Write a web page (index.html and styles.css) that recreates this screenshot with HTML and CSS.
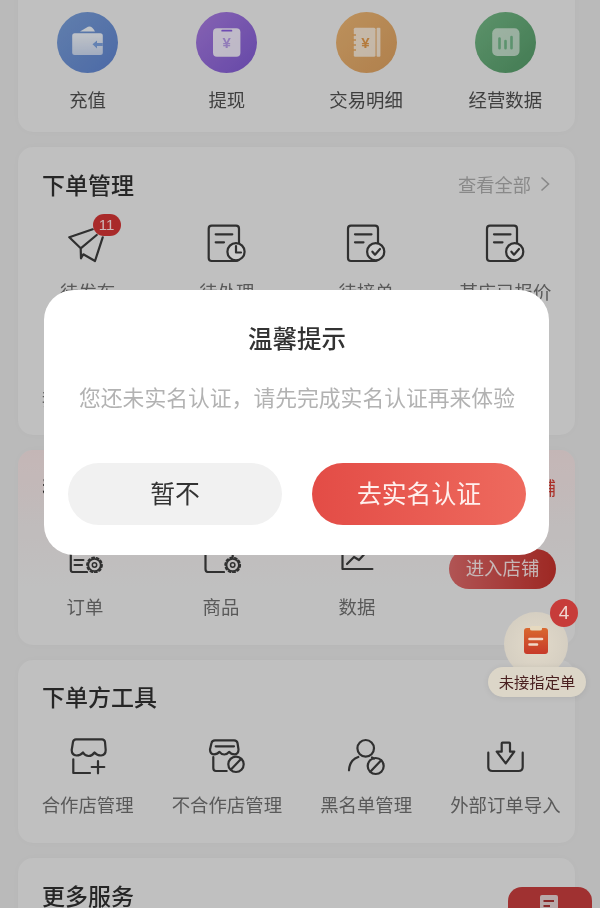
FILE: index.html
```html
<!DOCTYPE html>
<html lang="zh-CN">
<head>
    <meta charset="UTF-8">
    <meta name="viewport" content="width=device-width, initial-scale=1.0">
    <title>工作台</title>
    <link rel="stylesheet" href="styles.css">
</head>
<body>
<div class="screen">

    <div class="page">
        <!-- Wallet shortcuts -->
        <section class="card card-wallet">
            <div class="grid-four">
                <div class="tile">
                    <svg class="coin" viewBox="0 0 61 61">
                        <defs>
                            <linearGradient id="blue" x1="0" y1="0" x2="1" y2="1"><stop offset="0" stop-color="#7a9fd8"/><stop offset="1" stop-color="#5f84d0"/></linearGradient>
                            <linearGradient id="purple" x1="0" y1="0" x2="1" y2="1"><stop offset="0" stop-color="#a87ce0"/><stop offset="1" stop-color="#7f5ad2"/></linearGradient>
                            <linearGradient id="orange" x1="0" y1="0" x2="1" y2="1"><stop offset="0" stop-color="#ecb674"/><stop offset="1" stop-color="#dca060"/></linearGradient>
                            <linearGradient id="green" x1="0" y1="0" x2="1" y2="1"><stop offset="0" stop-color="#74b886"/><stop offset="1" stop-color="#549a68"/></linearGradient>
                            <linearGradient id="wallet" x1="0" y1="0" x2="0" y2="1"><stop offset="0" stop-color="#fff" stop-opacity=".9"/><stop offset="1" stop-color="#fff" stop-opacity=".65"/></linearGradient>
                        </defs>
                        <circle cx="30.5" cy="30.5" r="30.5" fill="url(#blue)"/>
                        <path d="M23 19.5 L31 14.8 Q34.5 13 38 19.5 Z" fill="#fff" fill-opacity=".9"/>
                        <rect x="15.2" y="21.3" width="30.6" height="21.7" rx="2.5" fill="url(#wallet)"/>
                        <path d="M35.5 32.3 L40 28.5 V31 H45.8 V34 H40 V36.5 Z" fill="#7da3e0"/>
                    </svg>
                    <span class="tile-label label-dark">充值</span>
                </div>
                <div class="tile">
                    <svg class="coin" viewBox="0 0 61 61">
                        <circle cx="30.5" cy="30.5" r="30.5" fill="url(#purple)"/>
                        <rect x="17" y="16.3" width="27.4" height="28.4" rx="4" fill="#fff" fill-opacity=".85"/>
                        <rect x="25.3" y="17.8" width="11" height="1.8" rx=".9" fill="#8a5fe0"/>
                        <text x="30.7" y="36" class="coin-yen" fill="#b79be8">¥</text>
                    </svg>
                    <span class="tile-label label-dark">提现</span>
                </div>
                <div class="tile">
                    <svg class="coin" viewBox="0 0 61 61">
                        <circle cx="30.5" cy="30.5" r="30.5" fill="url(#orange)"/>
                        <rect x="17.8" y="15.7" width="21.7" height="29" rx="1.5" fill="#fff" fill-opacity=".7"/>
                        <rect x="40.6" y="15.7" width="3.8" height="29" rx="1" fill="#fff" fill-opacity=".7"/>
                        <path d="M16.5 23 H20 M16.5 28 H20 M16.5 33 H20 M16.5 38 H20" stroke="#e8a860" stroke-width="1.5"/>
                        <text x="29.5" y="36" class="coin-yen" fill="#e39a4c">¥</text>
                    </svg>
                    <span class="tile-label label-dark">交易明细</span>
                </div>
                <div class="tile">
                    <svg class="coin" viewBox="0 0 61 61">
                        <circle cx="30.5" cy="30.5" r="30.5" fill="url(#green)"/>
                        <rect x="17.2" y="16.3" width="27.3" height="27.7" rx="5" fill="#fff" fill-opacity=".6"/>
                        <path d="M24.5 26.5 V36.3 M30.5 29 V36.3 M36.5 25 V36.3" stroke="#73b88a" stroke-width="2.6" stroke-linecap="round"/>
                    </svg>
                    <span class="tile-label label-dark">经营数据</span>
                </div>
            </div>
        </section>

        <!-- Orders -->
        <section class="card card-orders">
            <div class="card-head">
                <h2 class="card-title">下单管理</h2>
                <span class="see-all">查看全部
                    <svg class="chevron" viewBox="0 0 10 16"><path d="M1.5 1.5 L8.5 8 L1.5 14.5"/></svg>
                </span>
            </div>
            <div class="grid-four row-gap">
                <div class="tile tile-line">
                    <div class="line-icon">
                        <svg viewBox="0 0 44 40"><path d="M26.7 6.3 L3.3 14.3 L14.7 25.3 L15 35.3 L17.3 31.3 L29 38 L36.7 14.3 M14.7 25.3 L30.7 12"/></svg>
                        <span class="count-badge">11</span>
                    </div>
                    <span class="tile-label">待发布</span>
                </div>
                <div class="tile tile-line">
                    <div class="line-icon">
                        <svg viewBox="0 0 44 40">
                            <rect x="3.7" y="2.7" width="30.3" height="35.3" rx="3"/>
                            <path d="M10.7 11.3 H27.3 M10.7 19.3 H19"/>
                            <circle cx="31" cy="28.7" r="8.6" fill="#fff"/>
                            <path d="M31 23 V29.5 H36"/>
                        </svg>
                    </div>
                    <span class="tile-label">待处理</span>
                </div>
                <div class="tile tile-line">
                    <div class="line-icon">
                        <svg viewBox="0 0 44 40">
                            <rect x="4" y="2.7" width="30" height="35.3" rx="3"/>
                            <path d="M11 11.3 H27.5 M11 19.3 H19.5"/>
                            <circle cx="31.7" cy="28.7" r="8.6" fill="#fff"/>
                            <path d="M28.4 28.7 L31 31.7 L36 26"/>
                        </svg>
                    </div>
                    <span class="tile-label">待接单</span>
                </div>
                <div class="tile tile-line">
                    <div class="line-icon">
                        <svg viewBox="0 0 44 40">
                            <rect x="4" y="2.7" width="30" height="35.3" rx="3"/>
                            <path d="M11 11.3 H27.5 M11 19.3 H19.5"/>
                            <circle cx="31.7" cy="28.7" r="8.6" fill="#fff"/>
                            <path d="M28.4 28.7 L31 31.7 L36 26"/>
                        </svg>
                    </div>
                    <span class="tile-label">某店已报价</span>
                </div>
                <div class="tile tile-line">
                    <div class="line-icon"></div>
                    <span class="tile-label">我的报价单</span>
                </div>
            </div>
        </section>

        <!-- Shop -->
        <section class="card card-shop">
            <div class="card-head shop-head">
                <h2 class="card-title">我的店铺</h2>
                <span class="shop-link">管理店铺</span>
            </div>
            <div class="grid-shop">
                <div class="tile tile-line tile-shop">
                    <div class="line-icon">
                        <svg viewBox="0 0 44 40">
                            <path d="M7.8 4 V37 Q7.8 39 10 39 H24 M11.6 27 H20.4 M11.6 32 H19"/>
                            <circle cx="31.5" cy="32" r="6.2" stroke-width="1.8"/>
                            <circle cx="31.5" cy="32" r="7.4" stroke-width="2" stroke-dasharray="2 2.6"/>
                            <circle cx="31.5" cy="32" r="2.2" stroke-width="1.5"/>
                        </svg>
                    </div>
                    <span class="tile-label">订单</span>
                </div>
                <div class="tile tile-line tile-shop">
                    <div class="line-icon">
                        <svg viewBox="0 0 44 40">
                            <path d="M6.5 4 V36 Q6.5 39 9 39 H25 M33.7 19 V24"/>
                            <circle cx="33.7" cy="32" r="6.2" stroke-width="1.8"/>
                            <circle cx="33.7" cy="32" r="7.4" stroke-width="2" stroke-dasharray="2 2.6"/>
                            <circle cx="33.7" cy="32" r="2.2" stroke-width="1.5"/>
                        </svg>
                    </div>
                    <span class="tile-label">商品</span>
                </div>
                <div class="tile tile-line tile-shop">
                    <div class="line-icon">
                        <svg viewBox="0 0 44 40"><path d="M7.5 4 V36 H37.4 M12 31 L19 24 L24 27 L35 15"/></svg>
                    </div>
                    <span class="tile-label">数据</span>
                </div>
                <span class="enter-shop">进入店铺</span>
            </div>
        </section>

        <!-- Buyer tools -->
        <section class="card card-tools">
            <div class="card-head">
                <h2 class="card-title">下单方工具</h2>
            </div>
            <div class="grid-four">
                <div class="tile tile-line">
                    <div class="line-icon">
                        <svg viewBox="0 0 44 40">
                            <path d="M5.7 14 L7 6 Q7.5 3.3 10 3.3 H36 Q38.5 3.3 39 6 L39.7 14 Q39.7 19 35 19.5 Q31 19.5 28.5 16.5 Q26 20 22.7 20 Q19 20 17 16.5 Q14.5 19.5 10.5 19.5 Q5.7 19 5.7 14 Z"/>
                            <path d="M7.3 23.3 V37 H24 M25.7 31 H38.3 M32 25 V37.3"/>
                        </svg>
                    </div>
                    <span class="tile-label">合作店管理</span>
                </div>
                <div class="tile tile-line">
                    <div class="line-icon">
                        <svg viewBox="0 0 44 40">
                            <path d="M5 13.5 L6.5 7 Q7 4.3 10 4.3 H29 Q32 4.3 32.5 7 L33.5 13.5 Q33.5 18 29.5 18.3 Q26 18.3 24.3 15.8 Q22 18.5 19.3 18.5 Q16.5 18.5 14.5 15.8 Q12.5 18.3 9 18.3 Q5 18 5 13.5 Z"/>
                            <path d="M10.7 10.3 H29 M8.3 21 V32 Q8.3 35 11 35 H21.7"/>
                            <circle cx="31" cy="28.3" r="7.7"/>
                            <path d="M26 33.5 L36 23"/>
                        </svg>
                    </div>
                    <span class="tile-label">不合作店管理</span>
                </div>
                <div class="tile tile-line">
                    <div class="line-icon">
                        <svg viewBox="0 0 44 40">
                            <circle cx="21.7" cy="12.3" r="8.3"/>
                            <path d="M5 34.3 Q5.5 24 14.3 21 M28 21.5 L30 22.5"/>
                            <circle cx="31.7" cy="30" r="8"/>
                            <path d="M26.5 35.5 L37 24.5"/>
                        </svg>
                    </div>
                    <span class="tile-label">黑名单管理</span>
                </div>
                <div class="tile tile-line">
                    <div class="line-icon">
                        <svg viewBox="0 0 44 40">
                            <path d="M5.3 16.7 V31 Q5.3 35 9.5 35 H35.5 Q39.7 35 39.7 31 V16.7"/>
                            <path d="M18.7 7.5 Q18.7 6.7 19.5 6.7 H26.2 Q27 6.7 27 7.5 V15.7 H31.3 L22.7 27.3 L13.7 15.7 H18.7 Z"/>
                        </svg>
                    </div>
                    <span class="tile-label">外部订单导入</span>
                </div>
            </div>
        </section>

        <!-- More -->
        <section class="card card-more">
            <div class="card-head">
                <h2 class="card-title">更多服务</h2>
            </div>
        </section>
    </div>

    <!-- Bottom right tab -->
    <div class="side-tab">
        <svg viewBox="0 0 22 20"><path d="M3 0 H17 Q19 0 19 2 V20 H1 V2 Q1 0 3 0 Z" fill="#e6d4d4"/><path d="M4.5 6 H15 M4.5 11 H11" stroke="#ac3535" stroke-width="2"/></svg>
    </div>

    <div class="overlay">
        <div class="modal">
            <h3 class="modal-title">温馨提示</h3>
            <p class="modal-text">您还未实名认证，请先完成实名认证再来体验</p>
            <div class="modal-actions">
                <button class="btn btn-plain">暂不</button>
                <button class="btn btn-primary">去实名认证</button>
            </div>
        </div>
    </div>

    <!-- Floating reminder -->
    <div class="float-order">
        <div class="float-circle">
            <svg viewBox="0 0 24 28">
                <defs>
                    <linearGradient id="clip" x1="0" y1="0" x2="0" y2="1"><stop offset="0" stop-color="#d9682f"/><stop offset="1" stop-color="#c73a2a"/></linearGradient>
                </defs>
                <path d="M3 2 H21 Q24 2 24 5 V25 Q24 28 21 28 H3 Q0 28 0 25 V5 Q0 2 3 2 Z" fill="url(#clip)"/>
                <path d="M6 1.5 Q6 0 8 0 H16 Q18 0 18 1.5 V3 Q18 4.5 16 4.5 H8 Q6 4.5 6 3 Z" fill="#e6d9bf"/>
                <path d="M5.5 13 H18 M5.5 18.5 H13" stroke="#f0d8c8" stroke-width="2.6" stroke-linecap="round"/>
            </svg>
        </div>
        <span class="float-badge">4</span>
        <span class="float-label">未接指定单</span>
    </div>

</div>
</body>
</html>
```

FILE: styles.css
```css
/* General styling */
html, body {
    margin: 0;
    padding: 0;
}

body {
    width: 600px;
    height: 908px;
    overflow: hidden;
    font-family: "Noto Sans CJK SC", "Noto Sans", sans-serif;
}

.screen {
    position: relative;
    width: 600px;
    height: 908px;
    overflow: hidden;
    background-color: rgb(233, 233, 233);
    filter: blur(0.4px);
}

.page {
    display: flex;
    flex-direction: column;
    gap: 15px;
    margin-top: -20px;
    padding: 0 25px 0 18px;
}

/* Cards */
.card {
    background-color: rgb(240, 240, 240);
    border-radius: 15px;
    box-shadow: 0 0 8px rgba(0, 0, 0, 0.02);
}

.card-wallet {
    padding: 32px 0 20px;
}

.card-orders {
    padding: 21px 0 24px;
}

.card-shop {
    padding: 21px 0 26px;
    background: linear-gradient(180deg, rgb(246, 228, 228) 0, rgb(240, 236, 236) 45%, rgb(240, 240, 240) 70%);
}

.card-tools {
    padding: 20px 0 26px;
}

.card-more {
    height: 120px;
    padding: 21px 0 0;
    box-sizing: border-box;
}

.card-more .card-title {
    line-height: 26px;
}

.card-head {
    display: flex;
    justify-content: space-between;
    align-items: center;
    height: 32px;
    padding: 0 25px 0 24px;
    margin-bottom: 24px;
}

.card-orders .card-head {
    margin-bottom: 23px;
}

.shop-head {
    padding-right: 19px;
    margin-bottom: 30px;
}

.card-title {
    margin: 0;
    font-size: 23px;
    font-weight: 500;
    line-height: 32px;
    color: rgb(48, 48, 48);
}

.see-all {
    display: flex;
    align-items: center;
    gap: 9px;
    font-size: 18.3px;
    color: rgb(172, 172, 172);
}

.chevron {
    width: 10px;
    height: 16px;
    fill: none;
    stroke: rgb(172, 172, 172);
    stroke-width: 1.6;
}

.shop-link {
    font-size: 18px;
    color: rgb(214, 60, 50);
}

/* Tile grids */
.grid-four {
    display: grid;
    grid-template-columns: repeat(4, 139.25px);
}

.row-gap {
    row-gap: 26px;
}

.grid-shop {
    display: grid;
    grid-template-columns: repeat(3, 136px) 1fr;
    margin-left: -1px;
}

.tile {
    display: flex;
    flex-direction: column;
    align-items: center;
    gap: 13px;
    min-width: 0;
}

.tile-line {
    gap: 15px;
}

.tile-shop {
    gap: 20px;
}

.tile-label {
    font-size: 18.4px;
    line-height: 26px;
    white-space: nowrap;
    color: rgb(112, 112, 112);
}

.label-dark {
    color: rgb(80, 80, 80);
}

.coin {
    display: block;
    width: 61px;
    height: 61px;
}

.coin-yen {
    font-family: "Liberation Sans", sans-serif;
    font-size: 15px;
    font-weight: bold;
    text-anchor: middle;
}

.line-icon {
    position: relative;
    width: 44px;
    height: 40px;
}

.line-icon svg {
    display: block;
    width: 44px;
    height: 40px;
    fill: none;
    stroke: rgb(60, 60, 60);
    stroke-width: 2.2;
    stroke-linejoin: round;
    stroke-linecap: round;
}

.count-badge {
    position: absolute;
    left: 27px;
    top: -9px;
    width: 28px;
    height: 22px;
    border-radius: 11px;
    background-color: rgb(212, 53, 53);
    color: rgb(255, 230, 230);
    font-family: "Liberation Sans", sans-serif;
    font-size: 15px;
    line-height: 22px;
    text-align: center;
}

.enter-shop {
    justify-self: end;
    align-self: start;
    margin: 16px 19px 0 0;
    width: 107px;
    height: 40px;
    border-radius: 20px;
    background: linear-gradient(90deg, rgb(221, 106, 106), rgb(197, 50, 44));
    color: rgba(255, 255, 255, 0.85);
    font-size: 18.4px;
    line-height: 36px;
    text-align: center;
}

/* Tab peeking in at the bottom */
.side-tab {
    position: absolute;
    left: 508px;
    top: 887px;
    width: 84px;
    height: 40px;
    border-radius: 14px 14px 0 0;
    background-color: rgb(200, 62, 62);
    display: flex;
    justify-content: center;
    padding-top: 8px;
    box-sizing: border-box;
}

.side-tab svg {
    width: 22px;
    height: 20px;
}

/* Modal */
.overlay {
    position: absolute;
    inset: 0;
    background-color: rgba(0, 0, 0, 0.2);
    display: flex;
    align-items: flex-start;
    padding: 290px 0 0 44px;
    box-sizing: border-box;
}

.modal {
    width: 505px;
    height: 265px;
    box-sizing: border-box;
    padding: 31px 23px 0 24px;
    border-radius: 30px;
    background-color: white;
}

.modal-title {
    margin: 0;
    font-size: 24.5px;
    font-weight: 500;
    line-height: 34px;
    text-align: center;
    color: rgb(51, 51, 51);
}

.modal-text {
    margin: 25px 0 0;
    font-size: 21.8px;
    line-height: 34px;
    text-align: center;
    white-space: nowrap;
    color: rgb(178, 178, 178);
}

.modal-actions {
    display: flex;
    justify-content: space-between;
    margin-top: 49px;
}

.btn {
    width: 214px;
    height: 62px;
    border: none;
    border-radius: 31px;
    padding: 0 0 4px;
    font-family: inherit;
    font-size: 24.8px;
}

.btn-plain {
    background-color: rgb(241, 241, 241);
    color: rgb(51, 51, 51);
}

.btn-primary {
    background: linear-gradient(90deg, rgb(227, 76, 70), rgb(238, 106, 94));
    color: rgb(255, 240, 238);
}

/* Floating reminder */
.float-order {
    position: absolute;
    left: 488px;
    top: 599px;
    width: 98px;
    height: 98px;
}

.float-circle {
    position: absolute;
    left: 16px;
    top: 13px;
    width: 64px;
    height: 64px;
    border-radius: 50%;
    background: radial-gradient(circle, rgb(226, 218, 202), rgb(208, 202, 190));
    display: flex;
    justify-content: center;
    padding-top: 14px;
    box-sizing: border-box;
}

.float-circle svg {
    width: 24px;
    height: 28px;
}

.float-badge {
    position: absolute;
    left: 62px;
    top: 0;
    width: 28px;
    height: 28px;
    border-radius: 50%;
    background-color: rgb(199, 60, 58);
    color: rgb(240, 215, 210);
    font-family: "Liberation Sans", sans-serif;
    font-size: 19px;
    line-height: 28px;
    text-align: center;
}

.float-label {
    position: absolute;
    left: 0;
    bottom: 0;
    width: 98px;
    height: 30px;
    border-radius: 15px;
    background-color: rgb(220, 214, 200);
    box-shadow: 0 1px 6px rgba(0, 0, 0, 0.08);
    color: rgb(74, 32, 32);
    font-size: 15.3px;
    line-height: 28px;
    text-align: center;
    white-space: nowrap;
}
```
